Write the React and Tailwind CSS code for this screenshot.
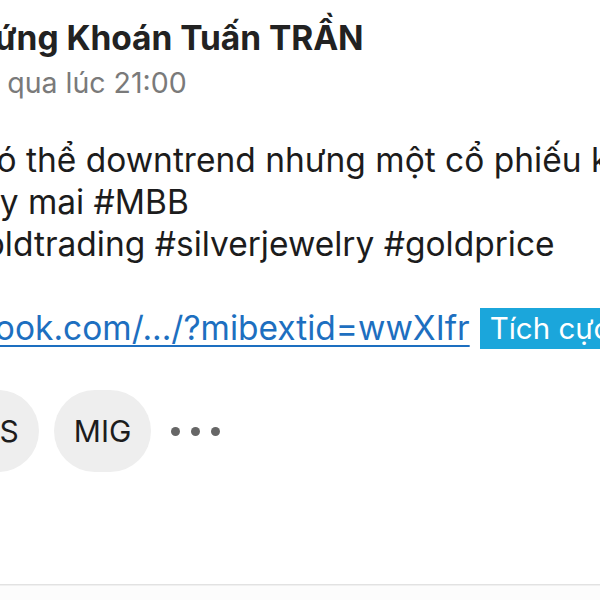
const Dot = () => <span className="block w-[9px] h-[9px] rounded-full bg-[#666]" />

export default function App() {
  return (
    <div className="w-[600px] h-[600px] overflow-hidden bg-white font-['Inter','Noto_Sans',sans-serif] flex flex-col">
      {/* HEADER */}
      <div className="pt-[18px] whitespace-nowrap">
        <div className="-ml-[51px] text-[33.5px] leading-[40px] font-bold text-[#222] tracking-[-0.05px]">
          Chứng Khoán Tuấn TRẦN
        </div>
        <div className="-ml-[64px] mt-[8px] text-[28.5px] leading-[34px] text-[#7a7a7a]">
          Hôm qua lúc 21:00
        </div>
      </div>

      {/* BODY */}
      <div className="mt-[39px] text-[33.5px] leading-[42px] text-[#1c1c1c] whitespace-nowrap">
        <div className="-ml-[28px]">Có thể downtrend nhưng một cổ phiếu không</div>
        <div className="-ml-[59px]">ngày mai #MBB</div>
        <div className="-ml-[57px]">#goldtrading #silverjewelry #goldprice</div>
        <div className="h-[42px]" />
        <div className="flex items-center">
          <a className="-ml-[95px] text-[#1d6fc0] underline decoration-[2px] underline-offset-[5px]">
            facebook.com/.../?mibextid=wwXIfr
          </a>
          <span className="ml-[10px] bg-[#1ba6db] text-white h-[41px] leading-[41px] px-[10px] text-[29.5px]">
            Tích cực
          </span>
        </div>
      </div>

      {/* CHIPS */}
      <div className="mt-[41px] flex items-center gap-[15px]">
        <div className="-ml-[62px] h-[82px] px-[20px] rounded-full bg-[#eeeeee] flex items-center text-[30px] text-[#1c1c1c]">
          SHS
        </div>
        <div className="h-[82px] px-[20px] rounded-full bg-[#eeeeee] flex items-center text-[30px] text-[#1c1c1c]">
          MIG
        </div>
        <div className="ml-[5px] flex items-center gap-[11px]">
          <Dot />
          <Dot />
          <Dot />
        </div>
      </div>

      <div className="flex-1" />
      <div className="h-[1px] bg-[#e2e2e2]" />
      <div className="h-[15px] bg-[#fcfcfc] border-t border-[#f0f0f0]" />
    </div>
  )
}
